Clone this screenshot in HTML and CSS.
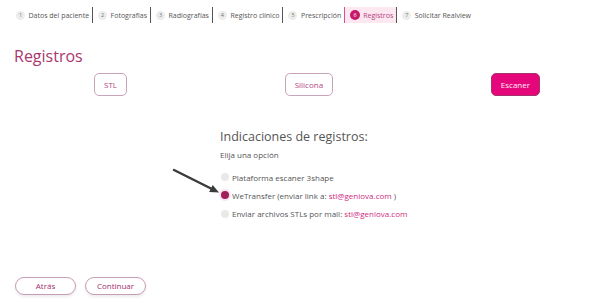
FILE: index.html
```html
<!DOCTYPE html>
<html lang="es">
<head>
<meta charset="utf-8">
<title>Registros</title>
<link rel="stylesheet" href="styles.css">
</head>
<body>
<div class="page">
  <nav class="stepper">
    <div class="step"><span class="num">1</span><span class="label">Datos del paciente</span></div>
    <div class="step"><span class="num">2</span><span class="label">Fotografías</span></div>
    <div class="step"><span class="num">3</span><span class="label">Radiografías</span></div>
    <div class="step"><span class="num">4</span><span class="label">Registro clínico</span></div>
    <div class="step"><span class="num">5</span><span class="label">Prescripción</span></div>
    <div class="step current"><span class="num">6</span><span class="label">Registros</span></div>
    <div class="step last"><span class="num">7</span><span class="label">Solicitar Realview</span></div>
  </nav>

  <h1 class="title">Registros</h1>

  <div class="methods">
    <button class="method">STL</button>
    <button class="method">Silicona</button>
    <button class="method selected">Escaner</button>
  </div>

  <section class="indications">
    <h2 class="heading">Indicaciones de registros:</h2>
    <p class="hint">Elija una opción</p>
    <ul class="options">
      <li class="option"><span class="radio"></span>Plataforma escaner 3shape</li>
      <li class="option"><span class="radio checked"></span>WeTransfer (enviar link a:&nbsp;<span class="mail">stl@geniova.com</span>&nbsp;)</li>
      <li class="option"><span class="radio"></span>Enviar archivos STLs por mail:&nbsp;<span class="mail">stl@geniova.com</span></li>
    </ul>
  </section>

  <div class="nav-buttons">
    <button class="pill">Atrás</button>
    <button class="pill">Continuar</button>
  </div>

  <svg class="arrow" width="56" height="34" viewBox="0 0 56 34">
    <line x1="4" y1="5" x2="41" y2="23.5" stroke="#3b3b3b" stroke-width="2.4" stroke-linecap="round"/>
    <polygon points="49,27.5 39.1,27.1 42.7,20" fill="#3b3b3b"/>
  </svg>
</div>
</body>
</html>
```

FILE: styles.css
```css
* { box-sizing: border-box; }

html, body {
  margin: 0;
  padding: 0;
  background: #ffffff;
}

body {
  font-family: "Open Sans", "Noto Sans", sans-serif;
  color: #555555;
}

.page {
  position: relative;
  width: 600px;
  height: 301px;
  overflow: hidden;
}

/* Stepper */
.stepper {
  display: flex;
  margin-top: 7px;
  padding-left: 16px;
  height: 16px;
}

.step {
  display: flex;
  align-items: center;
  height: 16px;
  padding: 0 3px 0 5px;
  border-right: 1px solid #555555;
  font-size: 7px;
  color: #555555;
  white-space: nowrap;
}

.step:first-child { padding-left: 0; }
.step.last { border-right: none; }

.num {
  display: inline-flex;
  align-items: center;
  justify-content: center;
  width: 9px;
  height: 9px;
  border-radius: 50%;
  background: #ececec;
  color: #777777;
  font-size: 5.5px;
  margin-right: 3.5px;
  flex-shrink: 0;
}

.step.current {
  background: #fde8f2;
  border-left: 1px solid #d2558f;
  margin-left: -1px;
}

.step.current .num {
  background: #c8176a;
  color: #ffffff;
  width: 10px;
  height: 10px;
  margin-right: 3px;
}

.step.current .label { color: #b4407c; }

/* Title */
.title {
  margin: 23px 0 0 0;
  padding-left: 14px;
  font-size: 16px;
  line-height: 20px;
  font-weight: 400;
  color: #a8386f;
}

/* Method buttons */
.methods {
  display: flex;
  justify-content: space-between;
  margin-top: 7px;
  padding: 0 60px 0 94px;
}

.method {
  height: 23px;
  padding: 0 9px;
  border: 1px solid #c9a3ba;
  border-radius: 5px;
  background: #ffffff;
  font-family: "Open Sans", sans-serif;
  font-size: 8px;
  color: #b5467f;
  line-height: 21px;
}

.method.selected {
  background: #e6067b;
  border-color: #a5326c;
  color: #fff0f7;
}

/* Indications */
.indications {
  padding-left: 220px;
  margin-top: 33px;
}

.heading {
  margin: 0;
  font-size: 12.5px;
  line-height: 16px;
  font-weight: 400;
  color: #555555;
}

.hint {
  margin: 4px 0 0 0;
  font-size: 8px;
  line-height: 12px;
  color: #555555;
}

.options {
  list-style: none;
  margin: 7px 0 0 0;
  padding: 0;
}

.option {
  display: flex;
  align-items: center;
  height: 18.3px;
  font-size: 8px;
  color: #555555;
  white-space: nowrap;
}

.radio {
  width: 8px;
  height: 8px;
  border-radius: 50%;
  background: #e9e9e9;
  margin: 0 3px 0 1px;
  flex-shrink: 0;
}

.radio.checked {
  background: #9e1f5c;
  box-shadow: 0 0 0 2px #fbe3ef;
}

.mail { color: #cf2a80; }

/* Bottom navigation */
.nav-buttons {
  display: flex;
  gap: 9px;
  margin-top: 54px;
  padding-left: 15px;
}

.pill {
  width: 61px;
  height: 18px;
  border: 1px solid #c89bb5;
  border-radius: 9px;
  background: #ffffff;
  box-shadow: 0 2px 3px rgba(0, 0, 0, 0.08);
  font-family: "Open Sans", sans-serif;
  font-size: 8px;
  line-height: 16px;
  color: #a0306a;
  padding: 0;
}

/* Annotation arrow overlay */
.arrow {
  position: absolute;
  left: 170px;
  top: 165px;
}
```
